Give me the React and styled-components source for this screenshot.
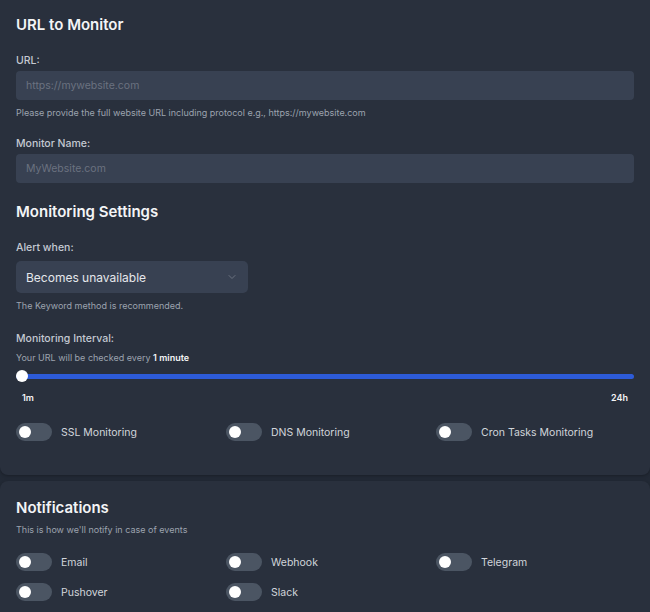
import React, { useState } from 'react'
import styled, { createGlobalStyle } from 'styled-components'

const GlobalStyle = createGlobalStyle`
  html, body {
    margin: 0;
    padding: 0;
    background: #222935;
    font-family: Inter, "Noto Sans", sans-serif;
    color: #d1d5db;
  }
  * { box-sizing: border-box; }
`;

const App = () => {
  const [toggles, setToggles] = useState({});

  const flip = (key) => setToggles(t => ({ ...t, [key]: !t[key] }));

  const renderToggle = (label) => (
    <ToggleItem key={label} onClick={() => flip(label)}>
      <Track on={toggles[label]}>
        <Knob on={toggles[label]} />
      </Track>
      <ToggleLabel>{label}</ToggleLabel>
    </ToggleItem>
  );

  return (
    <Page>
      <GlobalStyle />
      <Card>
        <Title>URL to Monitor</Title>
        <Field>
          <Label>URL:</Label>
          <Input placeholder="https://mywebsite.com" />
          <Help>Please provide the full website URL including protocol e.g., https://mywebsite.com</Help>
        </Field>
        <Field>
          <Label>Monitor Name:</Label>
          <Input placeholder="MyWebsite.com" />
        </Field>

        <Title top={18}>Monitoring Settings</Title>
        <Field>
          <Label>Alert when:</Label>
          <Select>
            <span>Becomes unavailable</span>
            <svg width="12" height="12" viewBox="0 0 24 24" fill="none" stroke="#6b7280" strokeWidth="2" strokeLinecap="round" strokeLinejoin="round">
              <path d="m6 9 6 6 6-6" />
            </svg>
          </Select>
          <Help>The Keyword method is recommended.</Help>
        </Field>

        <Field top={20}>
          <Label>Monitoring Interval:</Label>
          <Help top={3}>Your URL will be checked every <b>1 minute</b></Help>
          <Slider>
            <SliderTrack />
            <SliderThumb />
          </Slider>
          <Ticks>
            <span>1m</span>
            <span>24h</span>
          </Ticks>
        </Field>

        <ToggleGrid top={20}>
          {['SSL Monitoring', 'DNS Monitoring', 'Cron Tasks Monitoring'].map(renderToggle)}
        </ToggleGrid>
      </Card>

      <Card>
        <Title>Notifications</Title>
        <Help top={5}>This is how we'll notify in case of events</Help>
        <ToggleGrid top={17} rowGap={12}>
          {['Email', 'Webhook', 'Telegram', 'Pushover', 'Slack'].map(renderToggle)}
        </ToggleGrid>
      </Card>
    </Page>
  );
};

const Page = styled.div`
  display: flex;
  flex-direction: column;
  gap: 6px;
`;

const Card = styled.section`
  background: #29303d;
  border-radius: 0 0 8px 8px;
  padding: 14px 16px 34px;
  box-shadow: 0 1px 3px rgba(0, 0, 0, 0.25);

  & + & {
    border-radius: 8px 8px 0 0;
    padding-top: 16px;
  }
`;

const Title = styled.h2`
  margin: ${p => p.top || 0}px 0 0;
  font-size: 15px;
  font-weight: 600;
  color: #f3f4f6;
  line-height: 22px;
`;

const Field = styled.div`
  display: flex;
  flex-direction: column;
  margin-top: ${p => p.top || 18}px;
`;

const Label = styled.label`
  font-size: 10.5px;
  font-weight: 500;
  color: #c4c9d2;
  line-height: 14px;
  margin-bottom: 3px;
`;

const Input = styled.input`
  height: 29px;
  width: 100%;
  background: #384152;
  border: none;
  border-radius: 4px;
  padding: 0 10px;
  font-family: inherit;
  font-size: 10.5px;
  color: #e5e7eb;
  outline: none;

  &::placeholder {
    color: #6b7280;
  }
`;

const Help = styled.p`
  margin: ${p => p.top || 7}px 0 0;
  font-size: 9px;
  color: #9ca3af;
  line-height: 12px;

  b {
    color: #f3f4f6;
    font-weight: 600;
  }
`;

const Select = styled.div`
  width: 232px;
  height: 32px;
  background: #384152;
  border-radius: 5px;
  display: flex;
  align-items: center;
  justify-content: space-between;
  padding: 0 10px;
  font-size: 12px;
  color: #e5e7eb;
  margin-top: 3px;
`;

const Slider = styled.div`
  position: relative;
  height: 14px;
  margin-top: 5px;
  display: flex;
  align-items: center;
`;

const SliderTrack = styled.div`
  width: 100%;
  height: 5px;
  border-radius: 3px;
  background: #2d5bd8;
`;

const SliderThumb = styled.div`
  position: absolute;
  left: 0;
  top: 1px;
  width: 12px;
  height: 12px;
  border-radius: 50%;
  background: #ffffff;
`;

const Ticks = styled.div`
  display: flex;
  justify-content: space-between;
  padding: 0 6px;
  margin-top: 9px;
  font-size: 9px;
  font-weight: 600;
  color: #f3f4f6;
`;

const ToggleGrid = styled.div`
  display: grid;
  grid-template-columns: repeat(3, 1fr);
  column-gap: 12px;
  row-gap: ${p => p.rowGap || 12}px;
  margin-top: ${p => p.top || 20}px;
`;

const ToggleItem = styled.div`
  display: flex;
  align-items: center;
  gap: 9px;
  cursor: pointer;
`;

const Track = styled.div`
  width: 36px;
  height: 18px;
  border-radius: 9px;
  background: ${p => (p.on ? '#2d5bd8' : '#4b5563')};
  position: relative;
  flex-shrink: 0;
`;

const Knob = styled.div`
  position: absolute;
  top: 3px;
  left: ${p => (p.on ? '21px' : '3px')};
  width: 12px;
  height: 12px;
  border-radius: 50%;
  background: #ffffff;
`;

const ToggleLabel = styled.span`
  font-size: 10.5px;
  color: #d1d5db;
`;

export default App;
